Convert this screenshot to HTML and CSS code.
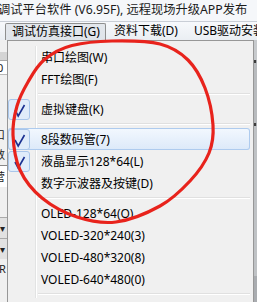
FILE: index.html
```html
<!DOCTYPE html>
<html lang="zh">
<head>
<meta charset="utf-8">
<title>调试仿真接口菜单</title>
<link rel="stylesheet" href="styles.css">
</head>
<body>
<div class="screen">
  <div class="titlebar"><span class="title-text">调试平台软件 (V6.95F), 远程现场升级APP发布</span></div>
  <div class="menubar">
    <span class="mi active">调试仿真接口(G)</span>
    <span class="mi">资料下载(D)</span>
    <span class="mi">USB驱动安装</span>
  </div>
  <div class="body">
    <div class="leftstrip">
      <div class="ls ls-a"></div>
      <div class="ls ls-b"></div>
      <div class="ls ls-c">0</div>
      <div class="ls ls-d"></div>
      <div class="ls ls-e">口</div>
      <div class="ls ls-e">数</div>
      <div class="ls ls-f">营</div>
      <div class="ls ls-g"></div>
      <div class="ls ls-h">▾</div>
      <div class="ls ls-h">▾</div>
      <div class="ls ls-i">R</div>
    </div>
    <div class="menu">
      <div class="item"><span class="gut"></span><span class="lbl">串口绘图(W)</span></div>
      <div class="item"><span class="gut"></span><span class="lbl">FFT绘图(F)</span></div>
      <div class="sep"><span class="gut"></span><span class="line"></span></div>
      <div class="item"><span class="gut"><span class="chk"><svg viewBox="0 0 22 21" width="22" height="21"><path d="M7 11 L10.2 17 L16.5 6" fill="none" stroke="#1b3192" stroke-width="1.6" stroke-linejoin="miter"/></svg></span></span><span class="lbl">虚拟键盘(K)</span></div>
      <div class="sep"><span class="gut"></span><span class="line"></span></div>
      <div class="item hover"><span class="gut"><span class="chk"><svg viewBox="0 0 22 21" width="22" height="21"><path d="M7 11 L10.2 17 L16.5 6" fill="none" stroke="#1b3192" stroke-width="1.6" stroke-linejoin="miter"/></svg></span></span><span class="lbl">8段数码管(7)</span></div>
      <div class="item"><span class="gut"><span class="chk"><svg viewBox="0 0 22 21" width="22" height="21"><path d="M7 11 L10.2 17 L16.5 6" fill="none" stroke="#1b3192" stroke-width="1.6" stroke-linejoin="miter"/></svg></span></span><span class="lbl">液晶显示128*64(L)</span></div>
      <div class="item"><span class="gut"></span><span class="lbl">数字示波器及按键(D)</span></div>
      <div class="sep"><span class="gut"></span><span class="line"></span></div>
      <div class="item"><span class="gut"></span><span class="lbl">OLED-128*64(O)</span></div>
      <div class="item"><span class="gut"></span><span class="lbl">VOLED-320*240(3)</span></div>
      <div class="item"><span class="gut"></span><span class="lbl">VOLED-480*320(8)</span></div>
      <div class="item"><span class="gut"></span><span class="lbl">VOLED-640*480(0)</span></div>
      <div class="sep"><span class="gut"></span><span class="line"></span></div>
    </div>
    <div class="rightstrip">
      <div class="rs rs-a"></div>
      <div class="rs rs-b"></div>
      <div class="rs rs-c"></div>
      <div class="rs rs-b"></div>
      <div class="rs rs-d"></div>
    </div>
  </div>
  <svg class="circle" viewBox="0 0 257 302" width="257" height="302">
    <path d="M112 41 C126.7 40.7 147.3 40.7 160 44 C172.7 47.3 180.5 52.5 188 60 C195.5 67.5 200.8 77.2 205 88 C209.2 98.8 212.3 114.2 213 125 C213.7 135.8 212.8 143.7 209 153 C205.2 162.3 198.2 172.2 190 181 C181.8 189.8 172.3 199.2 160 206 C147.7 212.8 129.8 220.2 116 222 C102.2 223.8 89.3 221 77 217 C64.7 213 51.5 205.8 42 198 C32.5 190.2 24.8 180.5 20 170 C15.2 159.5 13.5 145.7 13 135 C12.5 124.3 14.5 114.8 17 106 C19.5 97.2 23.5 89.7 28 82 C32.5 74.3 36.7 66.2 44 60 C51.3 53.8 60.7 48.3 72 45.5 C83.3 42.7 97.3 41.3 112 41 Z" fill="none" stroke="#e8231c" stroke-width="3.2"/>
  </svg>
</div>
</body>
</html>
```

FILE: styles.css
```css
* { box-sizing: border-box; }
html, body { margin: 0; padding: 0; }
body {
  width: 257px;
  height: 302px;
  overflow: hidden;
  background: #f0f0f0;
  font-family: "Noto Sans", "Noto Sans CJK SC", sans-serif;
  font-size: 12px;
  color: #000;
}
.screen {
  position: relative;
  width: 257px;
  height: 302px;
  overflow: hidden;
  display: flex;
  flex-direction: column;
}
.titlebar {
  height: 22px;
  flex: none;
  background: #f5f7fa;
  border-bottom: 1px solid #c9ced6;
  white-space: nowrap;
  overflow: hidden;
  color: #1b1b1b;
}
.title-text {
  display: block;
  margin-left: -2px;
  line-height: 20px;
  font-size: 12.25px;
}
.menubar {
  height: 18px;
  flex: none;
  display: flex;
  align-items: stretch;
  white-space: nowrap;
  background: linear-gradient(#f7f9fc, #eaeef3);
}
.mi {
  padding: 0 8px;
  line-height: 17px;
  color: #000;
}
.mi.active {
  margin-left: 5px;
  padding: 0 5px 0 6px;
  border: 1px solid #8e8f8f;
  border-bottom: none;
  border-radius: 2px 2px 0 0;
  background: linear-gradient(#e3e7ec, #dfe4ea);
  line-height: 16px;
  margin-top: 1px;
}
.body {
  flex: 1;
  display: flex;
  min-height: 0;
}
.leftstrip {
  width: 7px;
  flex: none;
  display: flex;
  flex-direction: column;
  overflow: hidden;
  background: #f0f0f0;
}
.ls { flex: none; overflow: hidden; white-space: nowrap; font-size: 11px; line-height: 14px; color: #222; }
.ls-a { height: 12px; background: #f0f0f0; }
.ls-b { height: 9px; background: #d4d4d4; border-bottom: 1px solid #a8a8a8; }
.ls-c { height: 14px; background: #fff; border-bottom: 1px solid #b8b8b8; text-indent: -3px; }
.ls-d { height: 50px; background: #f0f0f0; }
.ls-e { height: 20px; line-height: 20px; text-indent: -6px; }
.ls-f { height: 22px; line-height: 22px; background: #fff; border-top: 1px solid #888; text-indent: -6px; }
.ls-g { height: 30px; }
.ls-h { height: 21px; line-height: 21px; background: #e2e2e2; border-top: 1px solid #aaa; text-indent: 0; font-size: 10px; }
.ls-i { height: 20px; line-height: 20px; text-indent: -1px; }
.menu {
  width: 247px;
  flex: none;
  background: #f0f0f0;
  border: 1px solid #979797;
  border-bottom: none;
  padding: 5px 3px 0 0;
}
.item {
  display: flex;
  align-items: center;
  height: 22px;
  white-space: nowrap;
  border-radius: 3px;
}
.gut {
  width: 28px;
  height: 100%;
  flex: none;
  display: flex;
  align-items: center;
  border-right: 1px solid #e2e3e3;
  box-shadow: 1px 0 0 #ffffff;
}
.lbl {
  padding-left: 5px;
  color: #000;
}
.item.hover {
  background: linear-gradient(#f3f8fe, #dce9f9);
  box-shadow: inset 0 0 0 1px #aecbee;
}
.item.hover .gut { border-right-color: transparent; box-shadow: none; }
.chk {
  width: 22px;
  height: 21px;
  border: 1px solid #a9c6ea;
  border-radius: 3px;
  background: #e0ecfa;
  display: flex;
}
.chk svg { display: block; margin: -1px; }
.sep {
  display: flex;
  align-items: center;
  height: 8px;
}
.sep .line {
  flex: 1;
  height: 2px;
  margin-left: 2px;
  border-top: 1px solid #e0e0e0;
  border-bottom: 1px solid #ffffff;
}
.rightstrip {
  flex: 1;
  display: flex;
  flex-direction: column;
  background: #a9acb0;
}
.rs { flex: none; }
.rs-a { height: 20px; background: #c7cacd; }
.rs-b { height: 3px; background: #3c3c3c; margin-right: 1px; }
.rs-c { height: 60px; background: #b8bbbe; }
.rs-d { height: 150px; background: #bfc2c5; }
.circle {
  position: absolute;
  left: 0;
  top: 0;
  pointer-events: none;
}
```
